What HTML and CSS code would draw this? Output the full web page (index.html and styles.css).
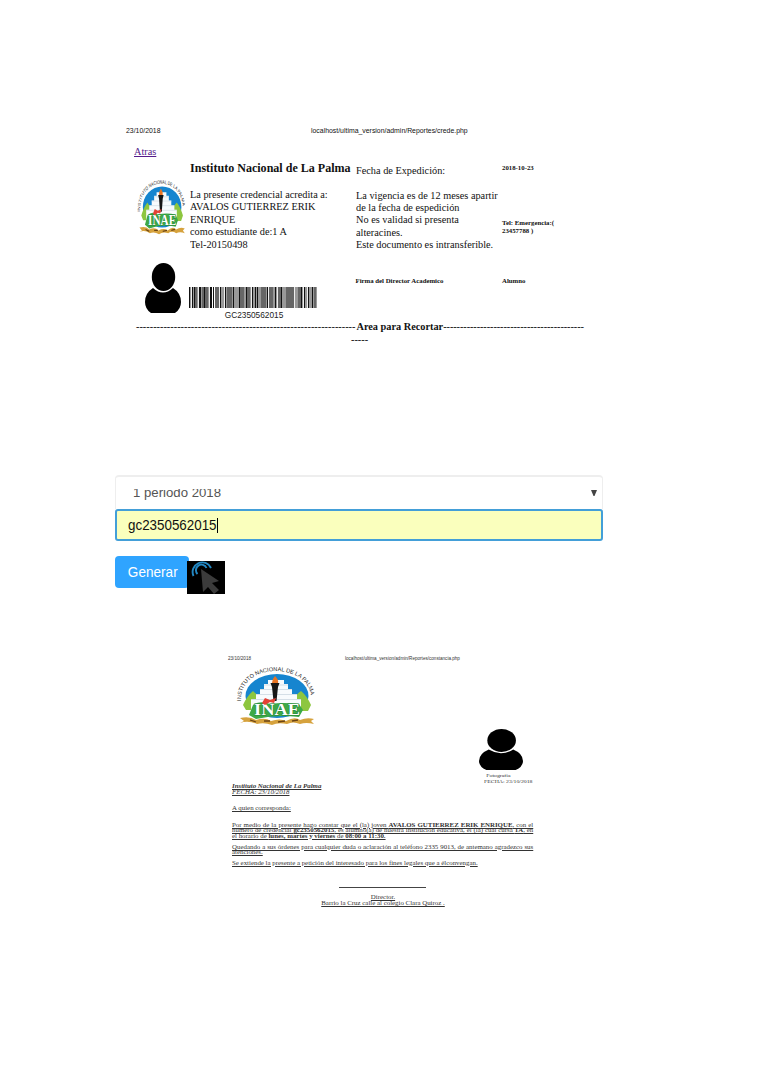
FILE: index.html
```html
<!DOCTYPE html>
<html lang="es">
<head>
<meta charset="utf-8">
<title>Credencial y constancia</title>
<link rel="stylesheet" href="styles.css">
</head>
<body>
<main class="page">
  <section class="credential">
    <header class="print-head"><span class="print-date">23/10/2018</span><span class="print-url">localhost/ultima_version/admin/Reportes/crede.php</span></header>
    <a class="back" href="#">Atras</a>
    <div class="card">
      <div class="col-media">
        <svg class="logo-small" viewBox="0 0 80 60" preserveAspectRatio="none">
          <g id="logo">
            <ellipse cx="41" cy="29" rx="31.500" ry="22" fill="#1685cf"/>
            <path d="M7 38Q11 29 17 24Q23 29 26 37L30 43H10ZM54 38Q60 27 65 24Q71 29 75 38L72 44H54Z" fill="#8dc63f"/>
            <path d="M32 13H48V17H52V22H56V27H61V32H65V44H15V32H20V27H24V22H28V17H32Z" fill="#f8fbfd"/>
            <path d="M28 18H52M24 22.500H56M20 27.500H61M15 32.500H65" stroke="#c6d3dc" stroke-width=".7"/>
            <path d="M34.500 16H43.500L42 20L40.500 34H37.500L36 20Z" fill="#171717"/>
            <path d="M36 16Q36 12 39 9Q43 13 42 16Z" fill="#e87524"/>
            <path d="M17 38Q24 33 34 37Q48 35 63 37L67 43L63 50Q41 47 20 52L13 48Z" fill="#3da947"/>
            <text x="18" y="48" class="logo-name" textLength="46" lengthAdjust="spacingAndGlyphs">INAE</text>
            <path d="M26 36L29 31L34 33L40 31L38 36L34 35L29 38Z" fill="#e44236"/>
            <path d="M4 51Q14 49 20 53Q29 50 35 54Q44 51 50 54Q59 49 64 53Q71 50 78 52L75 54L78 57Q70 55 64 57Q57 54 51 57Q42 55 36 58Q28 55 21 57Q12 53 4 56L8 54Z" fill="#d6a23d"/>
            <path d="M14 53L20 55M28 54H34M42 55L49 54M56 54L62 53" stroke="#6b4314" stroke-width="1.300"/>
            <path id="arch" d="M5 34C3 -6 77 -6 75 34" fill="none"/>
            <text class="logo-arch"><textPath href="#arch" textLength="98">INSTITUTO NACIONAL DE LA PALMA</textPath></text>
          </g>
        </svg>
        <svg class="person-small" viewBox="0 0 36 50" preserveAspectRatio="none">
          <g id="person">
            <path d="M8 25Q18 34 28 25Q36 30 36 39Q36 46 30 50H6Q0 46 0 39Q0 30 8 25Z"/>
            <ellipse cx="18.500" cy="14" rx="11.700" ry="14"/>
          </g>
        </svg>
      </div>
      <div class="col-holder">
        <h1 class="school">Instituto Nacional de La Palma</h1>
        <p class="holder">La presente credencial acredita a:<br>AVALOS GUTIERREZ ERIK<br>ENRIQUE<br>como estudiante de:1 A<br>Tel-20150498</p>
        <figure class="barcode">
          <svg class="bars" viewBox="0 0 128 21" preserveAspectRatio="none" shape-rendering="crispEdges">
            <path fill="#999" d="M0 0H20V21H0ZM31 0H62V21H31ZM64 0H78V21H64ZM81 0H97V21H81ZM106 0H128V21H106Z"/>
            <path fill="#666" d="M6 0H8V21H6ZM13 0H19V21H13ZM26 0H30V21H26ZM38 0H43V21H38ZM51 0H55V21H51ZM58 0H61V21H58ZM72 0H77V21H72ZM80 0H84V21H80ZM89 0H92V21H89ZM97 0H105V21H97ZM109 0H113V21H109ZM125 0H127V21H125Z"/>
            <path fill="#111" d="M0 0H1V21H0ZM3 0H4V21H3ZM5 0H6V21H5ZM10 0H12V21H10ZM15 0H16V21H15ZM21 0H23V21H21ZM24 0H25V21H24ZM31 0H32V21H31ZM36 0H37V21H36ZM44 0H45V21H44ZM50 0H51V21H50ZM57 0H58V21H57ZM63 0H64V21H63ZM66 0H67V21H66ZM68 0H69V21H68ZM78 0H79V21H78ZM86 0H87V21H86ZM92 0H93V21H92ZM112 0H113V21H112ZM115 0H116V21H115ZM119 0H120V21H119ZM123 0H124V21H123Z"/>
            <path fill="#eee" d="M2 0H3V21H2ZM9 0H10V21H9ZM20 0H21V21H20ZM30 0H31V21H30ZM35 0H36V21H35ZM62 0H63V21H62ZM79 0H80V21H79ZM88 0H89V21H88ZM105 0H106V21H105ZM114 0H115V21H114ZM118 0H119V21H118Z"/>
          </svg>
          <figcaption class="barcode-text">GC2350562015</figcaption>
        </figure>
      </div>
      <div class="col-terms">
        <p class="issued">Fecha de Expedición:</p>
        <p class="terms">La vigencia es de 12 meses apartir<br>de la fecha de espedición<br>No es validad si presenta<br>alteracines.<br>Este documento es intransferible.</p>
        <p class="sign">Firma del Director Academico</p>
      </div>
      <div class="col-extra">
        <p class="extra-date">2018-10-23</p>
        <p class="emergency">Tel: Emergencia:(<br>23457788 )</p>
        <p class="student">Alumno</p>
      </div>
    </div>
    <p class="cut"><span class="dashes">----------------------------------------------------------------</span><b class="cut-label">Area para Recortar</b><span class="dashes dashes-end">------------------------------------------</span></p>
    <p class="cut-rest">-----</p>
  </section>

  <form class="search">
    <div class="period"><span class="period-text">1 periodo 2018</span><svg class="arrow" viewBox="0 0 6 6"><path d="M0 0H6L3.500 6H2.500Z"/></svg></div>
    <div class="code"><span class="code-text">gc2350562015</span><span class="caret"></span></div>
    <div class="actions">
      <button class="generate" type="button"><span class="generate-text">Generar</span></button>
      <svg class="pointer" viewBox="0 0 38 33">
        <path d="M0 0H38V33H0Z"/>
        <path d="M6.500 15A9.500 9.500 0 1 1 24 7M10.500 13A5.500 5.500 0 1 1 19.500 7" fill="none" stroke="#2388c4" stroke-width="1.900"/>
        <path d="M14 8L32 20L25 22L32 29L27 33L21 26L16 31Z" fill="#3b3b3b"/>
      </svg>
    </div>
  </form>

  <section class="letter">
    <header class="letter-head"><span class="letter-date">23/10/2018</span><span class="letter-url">localhost/ultima_version/admin/Reportes/constancia.php</span></header>
    <svg class="logo-large" viewBox="0 0 80 60"><use href="#logo"/></svg>
    <figure class="photo">
      <svg class="person-large" viewBox="0 0 36 50" preserveAspectRatio="none"><use href="#person"/></svg>
      <figcaption class="photo-text"><span class="photo-name">Fotografia</span><span class="photo-date">FECHA: 23/10/2018</span></figcaption>
    </figure>
    <div class="letter-body">
      <p class="letter-school"><b>Instituto Nacional de La Palma</b></p>
      <p class="letter-day">FECHA: 23/10/2018</p>
      <p class="greeting">A quien corresponda:</p>
      <p class="full">Por medio de la presente hago constar que el (la) joven <b>AVALOS GUTIERREZ ERIK ENRIQUE</b>, con el</p>
      <p class="full">número de credencial <b>gc2350562015</b>, es alumno(a) de nuestra institucion educativa, el (la) cual cursa <b>1A</b>, en</p>
      <p class="schedule">el horario de <b>lunes, martes y viernes</b> de <b>08:00 a 11:30.</b></p>
      <p class="full gap">Quedando a sus órdenes para cualquier duda o aclaración al teléfono 2335 9013, de antemano agradezco sus</p>
      <p class="attention">atenciones.</p>
      <p class="closing">Se extiende la presente a petición del interesado para los fines legales que a élconvengan.</p>
    </div>
    <footer class="signature">
      <p class="director">Director.</p>
      <p class="address">Barrio la Cruz calle al colegio Clara Quiroz .</p>
    </footer>
  </section>
</main>
</body>
</html>
```

FILE: styles.css
```css
* { box-sizing: border-box; }
body { margin: 0; background: #fff; color: #111; font-family: "Liberation Serif", serif; }
p, h1, figure { margin: 0; white-space: nowrap; }
svg { display: block; }
.page { width: 761px; height: 1075px; padding-top: 126px; overflow: hidden; }

.logo-small, .logo-large { overflow: visible; }
.logo-name { font: bold 16px "Liberation Serif", serif; fill: #fff; stroke: #26853a; stroke-width: 1px; paint-order: stroke; }
.logo-arch { font: 5.6px "Liberation Sans", sans-serif; fill: #222; }

/* Credential */
.credential { height: 349px; }
.print-head { display: flex; height: 10px; padding-left: 126px; font: 6.9px/10px "Liberation Sans", sans-serif; }
.print-date { width: 185px; }
.back { display: block; width: 22px; margin: 10px 0 0 134px; font-size: 10.3px; line-height: 12px; color: #551a8b; }
.card { box-sizing: content-box; display: grid; grid-template-columns: 53px 166px 146px 100px; height: 163px; padding-left: 137px; }
.logo-small { width: 49px; height: 56px; margin-top: 22px; }
.person-small { width: 36px; height: 50px; margin: 27px 0 0 8px; }
.school, .holder, .issued, .terms { transform: scaleX(.92); transform-origin: 0 0; }
.school { margin-top: 3px; font-size: 13.1px; line-height: 14px; }
.holder { margin-top: 13px; font-size: 11.2px; line-height: 12.4px; }
.barcode { width: 128px; margin: 37px 0 0 -1px; }
.bars { width: 128px; height: 21px; }
.barcode-text { margin-top: 2px; padding-left: 2px; font: 8.3px/10px "Liberation Sans", sans-serif; text-align: center; color: #222; }
.col-terms { margin-left: -.5px; }
.issued { margin-top: 6px; font-size: 11.2px; line-height: 12px; }
.terms { margin-top: 13px; font-size: 11.2px; line-height: 12.2px; }
.sign { margin-top: 27px; }
.sign, .extra-date, .emergency, .student { font-size: 6.8px; line-height: 8px; font-weight: bold; }
.extra-date { margin-top: 6px; }
.emergency { margin-top: 47px; }
.student { margin-top: 42px; }
.cut { display: flex; padding-left: 136px; font-size: 10.3px; line-height: 12px; }
.cut-label { margin-left: 1px; }
.dashes { font-weight: bold; color: #222; }
.dashes-end { letter-spacing: -.08px; }
.cut-rest { padding-left: 351px; font-size: 10.3px; line-height: 13px; font-weight: bold; color: #222; }

/* Search form */
.search { width: 488px; margin-left: 115px; font-family: "Liberation Sans", sans-serif; }
.period { display: flex; align-items: center; justify-content: space-between; height: 34px; padding: 0 5px 0 17px; border: 1px solid #eee; border-top-width: 2px; border-bottom: 0; border-radius: 4px 4px 0 0; }
.period-text { font-size: 13.2px; line-height: 16px; color: #555; clip-path: inset(4px 0 0 0); }
.arrow { width: 6px; height: 6px; fill: #444; }
.code { display: flex; align-items: center; height: 32px; padding-left: 11px; border: 2px solid #439fd8; border-radius: 3px; background: #faffbd; }
.code-text { width: 89px; font-size: 14.4px; line-height: 18px; color: #111; transform: scaleX(.93); transform-origin: 0 0; }
.caret { width: 1px; height: 15px; background: #000; }
.actions { display: flex; height: 38px; margin-top: 15px; }
.generate { width: 74px; height: 32px; padding: 0 0 0 1px; border: 0; border-radius: 4px; background: #2fa4ff; color: #fff; font: 14.6px "Liberation Sans", sans-serif; }
.generate-text { display: inline-block; transform: scaleX(.93); }
.pointer { width: 38px; height: 33px; margin: 5px 0 0 -2px; }

/* Letter */
.letter { padding-top: 61px; color: #333; }
.letter-head { display: flex; height: 8px; padding-left: 228px; font: 4.6px/8px "Liberation Sans", sans-serif; }
.letter-date { width: 117px; }
.logo-large { width: 80px; height: 60px; margin: 4px 0 0 236px; }
.photo { height: 56px; margin: 2px 0 0 479px; }
.person-large { width: 44px; height: 41px; }
.photo-text { display: flex; flex-direction: column; margin-top: 2.5px; padding-left: 5px; font-size: 5px; line-height: 6px; }
.photo-name { padding-left: 2px; }
.photo-name, .photo-date { transform: scaleX(1.16); transform-origin: 0 0; }
.letter-body { width: 241px; margin: -1px 0 0 232px; font-size: 5.5px; line-height: 5.5px; transform: scaleX(1.25); transform-origin: 0 0; }
.letter-body p { text-decoration: underline; text-decoration-thickness: .5px; }
.letter-school, .letter-day { font-style: italic; }
.greeting { margin: 11px 0; }
.letter-body .full { text-align-last: justify; }
.letter-body .gap { margin-top: 5.5px; }
.closing { margin-top: 5px; }
.signature { width: 124px; margin: 24px 0 0 321px; font-size: 5.5px; line-height: 6px; text-align: center; }
.signature::before { content: ""; display: block; width: 87px; height: 1px; margin: -3px auto 6px 18px; background: #444; }
.director, .address { text-decoration: underline; transform: scaleX(1.25); }
```
